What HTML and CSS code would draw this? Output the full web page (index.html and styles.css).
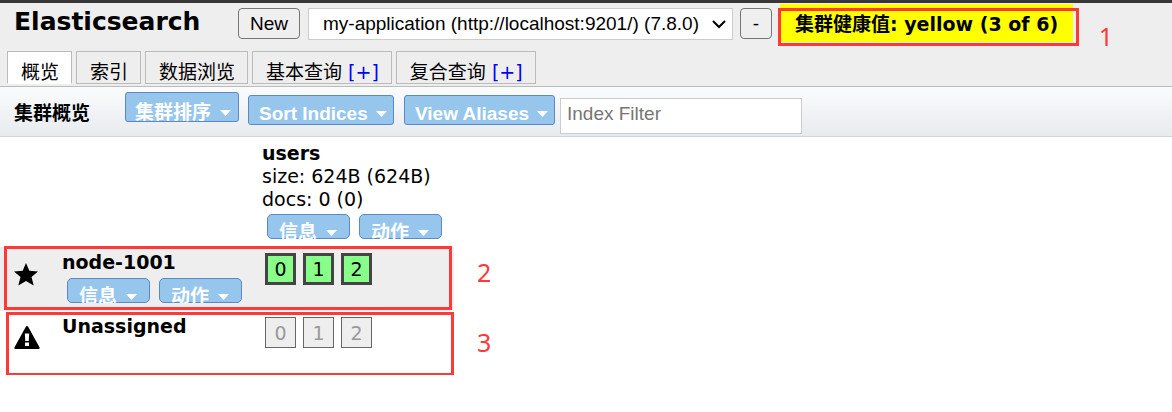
FILE: index.html
```html
<!DOCTYPE html>
<html lang="zh-CN">
<head>
<meta charset="utf-8">
<title>Elasticsearch</title>
<link rel="stylesheet" href="styles.css">
</head>
<body>
<svg class="sprite" aria-hidden="true">
  <symbol id="caret" viewBox="0 0 11 6"><path d="M0 0h11L5.500 6z"/></symbol>
</svg>
<header class="top">
  <div class="connect">
    <h1 class="brand">Elasticsearch</h1>
    <button class="plain new">New</button>
    <div class="picker">
      <select class="cluster" aria-label="Cluster"><option>my-application (http://localhost:9201/) (7.8.0)</option></select>
      <svg class="chevron" viewBox="0 0 14 9" aria-hidden="true"><path d="M1 1l6 6 6-6"/></svg>
    </div>
    <button class="plain remove">-</button>
    <div class="health">集群健康值: yellow (3 of 6)
      <span class="frame frame-health"></span>
      <span class="note note-health">1</span>
    </div>
  </div>
  <nav class="tabs">
    <button class="tab active">概览</button>
    <button class="tab">索引</button>
    <button class="tab">数据浏览</button>
    <button class="tab">基本查询 <span class="plus">[+]</span></button>
    <button class="tab">复合查询 <span class="plus">[+]</span></button>
  </nav>
</header>
<section class="toolbar">
  <h2 class="heading">集群概览</h2>
  <button class="menu sort-cluster"><span>集群排序</span><svg class="caret"><use href="#caret"/></svg></button>
  <button class="menu latin"><span>Sort Indices</span><svg class="caret"><use href="#caret"/></svg></button>
  <button class="menu latin"><span>View Aliases</span><svg class="caret"><use href="#caret"/></svg></button>
  <input class="filter" type="text" placeholder="Index Filter" aria-label="Index Filter">
</section>
<main class="overview">
  <table class="nodes">
    <thead>
      <tr>
        <td class="icon"></td><td class="name"></td>
        <th class="index" scope="col">
          <div class="title">users</div>
          <div class="stat">size: 624B (624B)</div>
          <div class="stat">docs: 0 (0)</div>
          <div class="actions">
            <button class="menu small"><span>信息</span><svg class="caret"><use href="#caret"/></svg></button>
            <button class="menu small"><span>动作</span><svg class="caret"><use href="#caret"/></svg></button>
          </div>
        </th>
      </tr>
    </thead>
    <tbody>
      <tr class="node odd">
        <td class="icon"><svg class="mark" viewBox="0 0 24 23" aria-hidden="true"><path d="M12 0l3.300 7.700 8.700.7-6.500 5.600 2.200 8.600L12 18l-7.700 4.600L6.500 14 0 8.400l8.700-.7z"/></svg></td>
        <th class="name" scope="row">
          <div class="title">node-1001</div>
          <div class="actions">
            <button class="menu small"><span>信息</span><svg class="caret"><use href="#caret"/></svg></button>
            <button class="menu small"><span>动作</span><svg class="caret"><use href="#caret"/></svg></button>
          </div>
        </th>
        <td class="index">
          <div class="shards"><span class="shard primary">0</span><span class="shard primary">1</span><span class="shard primary">2</span></div>
        </td>
      </tr>
      <tr class="node">
        <td class="icon"><svg class="mark warn" viewBox="0 0 26 24" aria-hidden="true"><path fill-rule="evenodd" d="M13 0q.8 0 1.300 1L25.600 21.500Q26 23 24.500 23H1.500Q0 23 .4 21.500L11.700 1Q12.200 0 13 0zM10.800 7.500l.5 7.500h3.400l.5-7.500zM11 16.500v3.500h4v-3.500z"/></svg></td>
        <th class="name" scope="row"><div class="title">Unassigned</div></th>
        <td class="index">
          <div class="shards"><span class="shard">0</span><span class="shard">1</span><span class="shard">2</span></div>
        </td>
      </tr>
    </tbody>
  </table>
  <span class="frame frame-node"></span>
  <span class="note note-node">2</span>
  <span class="frame frame-unassigned"></span>
  <span class="note note-unassigned">3</span>
</main>
</body>
</html>
```
FILE: styles.css
```css
* { box-sizing: border-box; }
body {
  margin: 0;
  background: #fff;
  color: #000;
  font: 19px/23px "DejaVu Sans", "Noto Sans CJK SC", sans-serif;
}
.sprite { position: absolute; width: 0; height: 0; }
button, select, input { margin: 0; color: inherit; font: inherit; }

.top {
  background: #eee;
  border-top: 3px solid #383636;
  border-bottom: 1px solid #bbb;
}
.connect {
  display: flex;
  align-items: center;
  height: 41px;
  padding-left: 14px;
}
.brand { width: 224px; margin: 0 0 4px; font-size: 25px; line-height: 30px; }
.plain {
  height: 31px;
  padding: 0;
  background: #efefef;
  border: 1px solid #767676;
  border-radius: 4px;
  font: 19px/22px "Liberation Sans", sans-serif;
}
.new { width: 62px; }
.remove { width: 32px; }
.picker { position: relative; width: 425px; margin: 0 7px 0 8px; }
.cluster {
  display: block;
  width: 100%;
  height: 32px;
  padding: 0 14px;
  appearance: none;
  background: #fff;
  border: 1px solid #ccc;
  border-radius: 0;
  font: 19px/22px "Liberation Sans", sans-serif;
}
.chevron {
  position: absolute;
  top: 12px;
  right: 7px;
  width: 14px;
  height: 9px;
  fill: none;
  stroke: #000;
  stroke-width: 2;
}
.health {
  position: relative;
  align-self: flex-start;
  margin: 1px 0 0 8px;
  padding: 9px 15px 6px;
  background: #ff0;
  font-weight: bold;
  white-space: nowrap;
}

.tabs { display: flex; gap: 4px; padding: 7px 7px 2px; }
.tab {
  height: 33px;
  padding: 9px 12px 0 13px;
  background: #eee;
  border: 1px solid #bbb;
  line-height: 23px;
  white-space: nowrap;
}
.active { background: #fff; border-bottom-color: #fff; }
.plus { color: #00f; }

.toolbar {
  display: flex;
  height: 50px;
  padding-left: 14px;
  background: linear-gradient(#fafcfc, #f1f3f6 50%, #e8ebee);
  border-bottom: 1px solid #ced5d9;
}
.heading { width: 111px; margin: 15px 0 0; font-size: 19px; line-height: 23px; }
.menu {
  display: flex;
  align-items: flex-start;
  justify-content: space-between;
  height: 30px;
  margin: 8px 10px 0 0;
  padding: 6px 6px 0 10px;
  overflow: clip;
  overflow-clip-margin: border-box;
  background: #96c6eb;
  border: 1px solid #5c88c5;
  border-radius: 3px;
  color: #fff;
  font: bold 19px/23px "Liberation Sans", "Noto Sans CJK SC", sans-serif;
  white-space: nowrap;
}
.caret { width: 11px; height: 6px; margin: 9px 0 0 8px; fill: #fff; }
.sort-cluster { width: 114px; margin: 5px 9px 0 0; padding: 8px 7px 0 9px; }
.latin { width: 146px; }
.latin + .latin { width: 151px; margin-right: 5px; }
.filter {
  width: 242px;
  height: 36px;
  margin-top: 11px;
  padding: 0 6px 4px;
  background: #fff;
  border: 1px solid #ccc;
  font: 19px/22px "Liberation Sans", sans-serif;
}
.filter::placeholder { color: #757575; }

.overview { position: relative; }
.nodes { border-collapse: collapse; }
.nodes th, .nodes td {
  padding: 4px 0 0;
  text-align: left;
  vertical-align: top;
  font-weight: normal;
}
.nodes thead .index { padding-top: 5px; }
.nodes .icon { width: 62px; padding: 16px 0 0 14px; }
.nodes .name { width: 200px; }
.nodes .index { width: 192px; }
thead tr { height: 110px; }
.node { height: 64px; }
.odd { background: #eee; }
.nodes .title { font-weight: bold; }
.actions { display: flex; gap: 9px; padding: 3px 0 0 5px; }
.node .actions { padding-top: 4px; }
.small {
  width: 83px;
  height: 25px;
  margin: 0;
  padding: 6px 12px 0 11px;
  border-radius: 5px;
}
.mark { display: block; width: 24px; height: 23px; }
.warn { width: 26px; height: 24px; margin-top: -1px; }
.shards { display: flex; gap: 7px; padding: 2px 0 0 3px; }
.shard {
  width: 31px;
  height: 31px;
  border: 1px solid #666;
  background: #eee;
  color: #999;
  line-height: 30px;
  text-align: center;
}
.primary { height: 32px; border: 3px solid #444; background: #8f8; color: #000; line-height: 26px; }
.small .caret { margin-left: 0; }

/* Numbered callouts drawn over the page */
.frame { position: absolute; border: 3px solid #fd3939; pointer-events: none; }
.frame-health { inset: 4px -6px -4px -2px; }
.frame-node { top: 109px; left: 4px; width: 448px; height: 64px; }
.frame-unassigned { top: 175px; left: 6px; width: 448px; height: 64px; }
.note { position: absolute; color: #fd3939; font: 25px/30px "Noto Sans", sans-serif; }
.note-health { top: 17px; right: -40px; }
.note-node { top: 120px; left: 477px; }
.note-unassigned { top: 190px; left: 477px; }
```
